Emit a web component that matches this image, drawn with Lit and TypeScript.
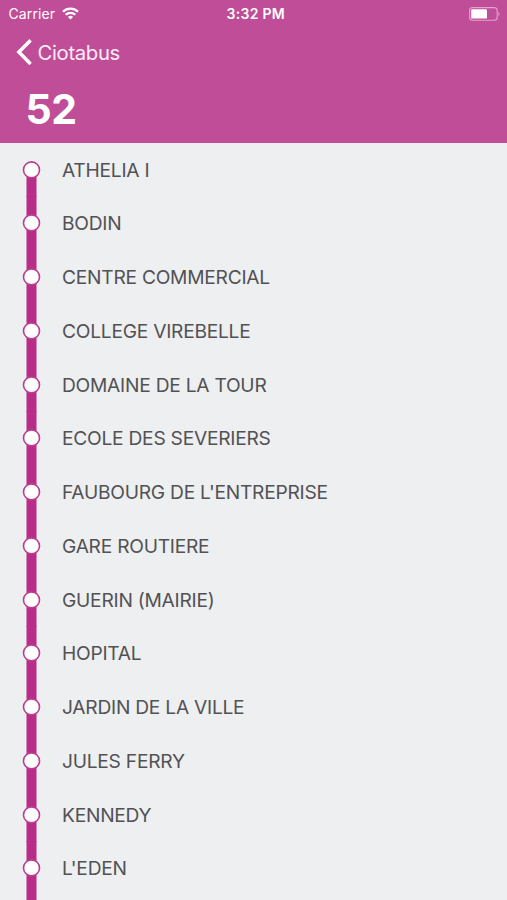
import { LitElement, html, css } from "lit";
import { customElement, property } from "lit/decorators.js";

@customElement("status-bar")
class StatusBar extends LitElement {
  static styles = css`
    :host { display: grid; grid-template-columns: 1fr auto 1fr; align-items: center; height: 27px; padding: 0 6px 0 8.5px; font-size: 14px; line-height: 27px; }
    .left { display: flex; align-items: center; gap: 7px; letter-spacing: 0.12px; }
    .time { font-weight: 600; font-size: 14px; letter-spacing: 0.3px; padding-left: 2px; }
    .battery { justify-self: end; }
    svg { display: block; }
  `;
  render() {
    return html`
      <div class="left"><span>Carrier</span>
        <svg width="17" height="13" viewBox="0 0 17 13" fill="none" stroke="#fff" stroke-width="2.3">
          <path d="M1 4.8a10.6 10.6 0 0 1 15 0M3.7 7.8a6.8 6.8 0 0 1 9.6 0" />
          <path d="M8.5 12.6 5.9 10a3.7 3.7 0 0 1 5.2 0z" fill="#fff" stroke="none" />
        </svg>
      </div>
      <span class="time">3:32 PM</span>
      <svg class="battery" width="32" height="14" viewBox="0 0 32 14">
        <rect x="0.6" y="0.6" width="27.6" height="12.6" rx="3" fill="none" stroke="#e2a5cd" stroke-width="1.1" />
        <rect x="2.2" y="2.2" width="15.8" height="9.4" rx="1.2" fill="#fff" />
        <path d="M29.5 4.8q2.2 2.1 0 4.2z" fill="#e2a5cd" />
      </svg>
    `;
  }
}

@customElement("nav-header")
class NavHeader extends LitElement {
  @property() back = "";
  @property() heading = "";
  static styles = css`
    :host { display: block; height: 115.5px; }
    .back { display: flex; align-items: center; gap: 4.5px; height: 50px; padding-left: 16px; font-size: 20.3px; font-weight: 400; letter-spacing: -0.33px; }
    h1 { margin: 0; padding: 10px 0 0 25.5px; font-size: 41px; line-height: 44px; font-weight: 700; letter-spacing: -0.5px; }
    svg { display: block; }
    span { color: #fcecf6; }
  `;
  render() {
    return html`
      <div class="back">
        <svg width="17" height="28" viewBox="0 0 17 28"><path d="M14.6 2.3 2.9 14.1l11.7 11.8" fill="none" stroke="#fff" stroke-width="3.5" /></svg>
        <span>${this.back}</span>
      </div>
      <h1>${this.heading}</h1>
    `;
  }
}

@customElement("stop-row")
class StopRow extends LitElement {
  @property() name = "";
  @property({ type: Boolean }) first = false;
  @property({ type: Boolean }) last = false;
  static styles = css`
    :host { display: flex; align-items: center; height: 53.77px; padding-left: 22px; gap: 21px; font-size: 19.2px; font-weight: 400; letter-spacing: -0.25px; color: #525254; }
    svg { display: block; flex: none; overflow: visible; }
    .name { white-space: nowrap; padding-top: 0.3px; }
  `;
  render() {
    const top = this.first ? 27 : 0;
    const bottom = this.last ? 70 : 54;
    return html`
      <svg width="19" height="53.77" viewBox="0 0 19 53.77">
        <rect x="4.5" y=${top} width="10" height=${bottom - top} fill="#b82d87" />
        <circle cx="9.5" cy="26.9" r="8" fill="#fff" stroke="#bd3c8f" stroke-width="1.6" />
      </svg>
      <span class="name">${this.name}</span>
    `;
  }
}

@customElement("app-root")
class AppRoot extends LitElement {
  private stops = [
    "ATHELIA I", "BODIN", "CENTRE COMMERCIAL", "COLLEGE VIREBELLE", "DOMAINE DE LA TOUR",
    "ECOLE DES SEVERIERS", "FAUBOURG DE L'ENTREPRISE", "GARE ROUTIERE", "GUERIN (MAIRIE)",
    "HOPITAL", "JARDIN DE LA VILLE", "JULES FERRY", "KENNEDY", "L'EDEN",
  ];
  static styles = css`
    :host { display: flex; flex-direction: column; height: 900px; overflow: hidden; background: #eeeff1; font-family: Inter, "Liberation Sans", sans-serif; }
    .top { flex: none; background: #c04d97; color: #fff; }
    .stops { flex: 1; min-height: 0; display: flex; flex-direction: column; }
    stop-row { flex: none; }
  `;
  render() {
    const end = this.stops.length - 1;
    return html`
      <div class="top">
        <status-bar></status-bar>
        <nav-header back="Ciotabus" heading="52"></nav-header>
      </div>
      <div class="stops">
        ${this.stops.map((s, i) => html`<stop-row .name=${s} .first=${i === 0} .last=${i === end}></stop-row>`)}
      </div>
    `;
  }
}
